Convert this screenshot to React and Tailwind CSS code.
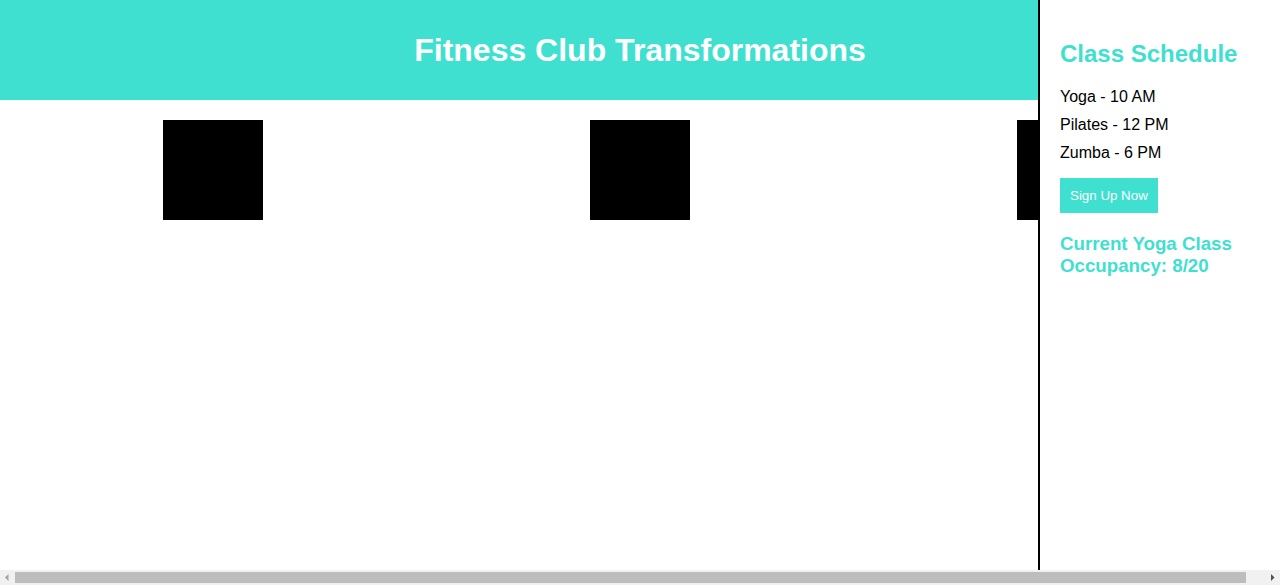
export default function App() {
  return (
    <div className="h-screen w-full overflow-hidden flex flex-col bg-white text-black" style={{ fontFamily: '"Liberation Sans", Arial, sans-serif' }}>
      <div className="flex-1 w-[1300px]">
        <header className="w-[1280px] h-[100px] bg-[#40E0D0] flex items-center justify-center">
          <h1 className="text-[32px] font-bold text-white leading-normal">Fitness Club Transformations</h1>
        </header>
        <div className="w-[1280px] grid grid-cols-3 pt-[20px]">
          <div className="flex justify-center"><div className="w-[100px] h-[100px] bg-black" /></div>
          <div className="flex justify-center"><div className="w-[100px] h-[100px] bg-black" /></div>
          <div className="flex justify-center"><div className="w-[100px] h-[100px] bg-black" /></div>
        </div>
      </div>
      <div className="h-[15px] w-full bg-[#f1f1f1] flex items-center shrink-0">
        <div className="w-[15px] h-[15px] flex items-center justify-center">
          <svg width="15" height="15" viewBox="0 0 15 15"><polygon points="8.5,4 8.5,11 5,7.5" fill="#a3a3a3" /></svg>
        </div>
        <div className="h-[11px] w-[1231px] bg-[#bdbdbd]" />
        <div className="flex-1" />
        <div className="w-[15px] h-[15px] flex items-center justify-center">
          <svg width="15" height="15" viewBox="0 0 15 15"><polygon points="6,4 6,11 9.5,7.5" fill="#505050" /></svg>
        </div>
      </div>
      <aside className="fixed top-0 right-0 h-[570px] w-[242px] bg-white border-l-2 border-black px-[20px] pt-[40px]">
        <h2 className="text-[24px] leading-[28px] font-bold text-[#40E0D0]">Class Schedule</h2>
        <ul className="mt-[15px]">
          <li className="text-[16px] leading-[18px] py-[5px]">Yoga - 10 AM</li>
          <li className="text-[16px] leading-[18px] py-[5px]">Pilates - 12 PM</li>
          <li className="text-[16px] leading-[18px] py-[5px]">Zumba - 6 PM</li>
        </ul>
        <button className="mt-[11px] bg-[#40E0D0] text-white text-[13.33px] leading-[15px] py-[10px] px-[10px]">Sign Up Now</button>
        <h3 className="mt-[20px] text-[18.72px] leading-[22px] font-bold text-[#40E0D0]">Current Yoga Class Occupancy: 8/20</h3>
      </aside>
    </div>
  );
}
